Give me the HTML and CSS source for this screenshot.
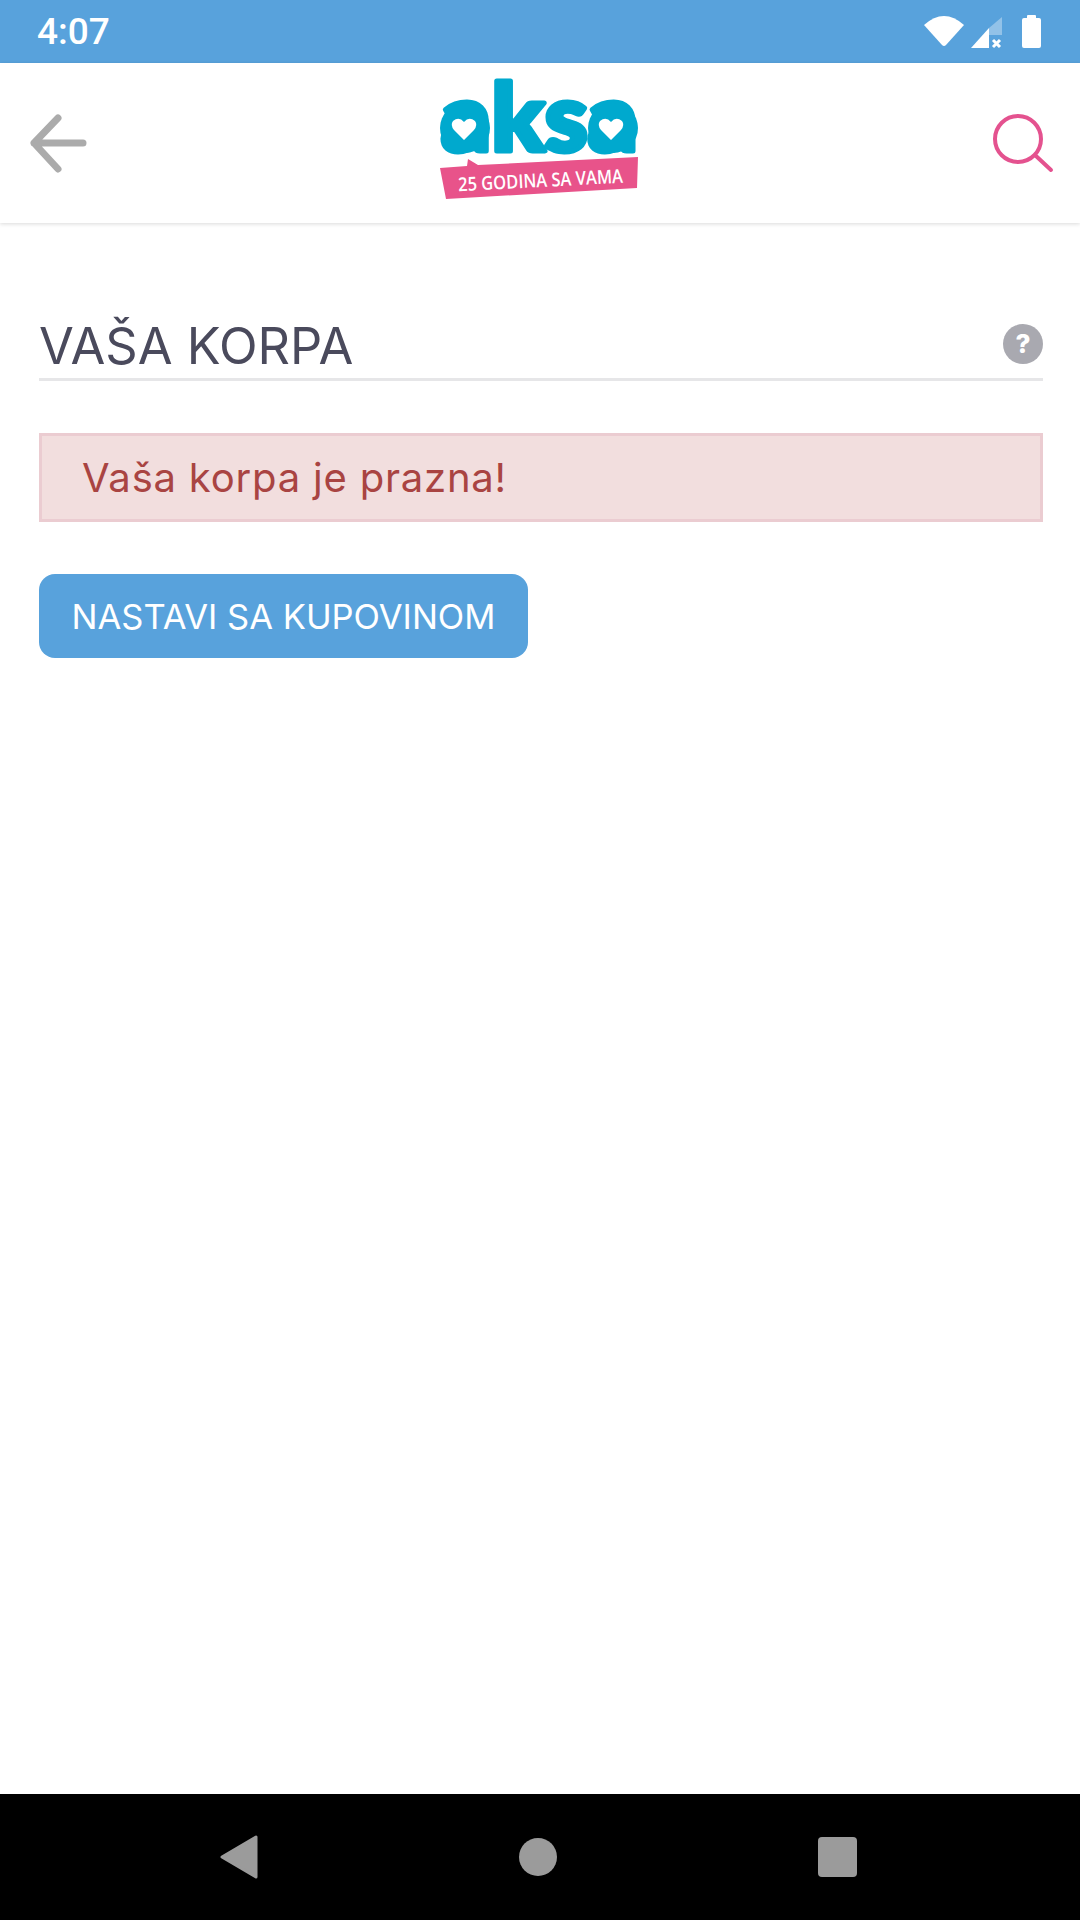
FILE: index.html
```html
<!DOCTYPE html>
<html lang="sr">
<head>
    <meta charset="UTF-8">
    <meta name="viewport" content="width=device-width, initial-scale=1.0">
    <title>Vaša korpa</title>
    <link rel="stylesheet" href="styles.css">
</head>
<body>
    <!-- status bar -->
    <div class="status-bar">
        <span class="status-time">4:07</span>
        <svg class="status-icons" viewBox="920 9 126 44" width="126" height="44">
            <path class="white" d="M924 24 Q944 6 964 24 L946 44 Q944 46 942 44 Z"/>
            <path class="faded" d="M989 27 L1002 16 V34 H989 Z"/>
            <path class="white" d="M971 47 L989 27 V47 Z"/>
            <path class="cross" d="M993 39 L1000 46 M1000 39 L993 46"/>
            <path class="white" d="M1027 17 V15 Q1027 14 1028 14 H1035 Q1036 14 1036 15 V17 H1039 Q1041 17 1041 19 V45 Q1041 47 1039 47 H1024 Q1022 47 1022 45 V19 Q1022 17 1024 17 Z"/>
        </svg>
    </div>

    <!-- top bar -->
    <header class="top-bar">
        <svg class="top-icon" viewBox="24 103 68 80" width="68" height="80">
            <path class="back-arrow" d="M83 143 H34 M58 118 L34 143 L58 169"/>
        </svg>
        <svg class="logo" viewBox="425 63 230 160" width="230" height="160">
            <text class="logo-word" x="441" y="151" textLength="197" lengthAdjust="spacingAndGlyphs">aksa</text>
            <circle class="logo-bowl" cx="465" cy="128" r="25"/>
            <circle class="logo-bowl" cx="613" cy="128" r="25"/>
            <path class="logo-heart" d="M464 140 L454 130 Q450 125 453 121 Q459 116 464 122 Q469 116 475 121 Q478 125 474 130 Z"/>
            <path class="logo-heart" d="M611 140 L601 130 Q597 125 600 121 Q606 116 611 122 Q616 116 622 121 Q625 125 621 130 Z"/>
            <path class="logo-banner" d="M440 168 L467 166 L468 159 L478 165 L638 157 L637 188 L446 199 Z"/>
            <text class="logo-tag" x="458" y="187" textLength="165" lengthAdjust="spacingAndGlyphs" transform="rotate(-3 540 180)">25 GODINA SA VAMA</text>
        </svg>
        <svg class="top-icon" viewBox="988 103 68 80" width="68" height="80">
            <circle class="search-icon" cx="1018" cy="139" r="23"/>
            <path class="search-icon" d="M1036 156 L1051 170"/>
        </svg>
    </header>

    <!-- cart -->
    <main class="content">
        <div class="title-row">
            <h1>VAŠA KORPA</h1>
            <span class="help">?</span>
        </div>
        <div class="alert">Vaša korpa je prazna!</div>
        <button class="continue" type="button">NASTAVI SA KUPOVINOM</button>
    </main>

    <!-- android nav -->
    <div class="nav-bar">
        <svg viewBox="0 0 38 44" width="38" height="44"><path class="nav-shape" d="M36 2 V42 L2 22 Z"/></svg>
        <span class="nav-circle"></span>
        <span class="nav-square"></span>
    </div>
</body>
</html>
```

FILE: styles.css
```css
* {
    box-sizing: border-box;
}

body {
    margin: 0;
    width: 1080px;
    height: 1920px;
    display: flex;
    flex-direction: column;
    background: #fff;
    font-family: Inter, "Open Sans", sans-serif;
}

/* status bar */
.status-bar {
    height: 63px;
    background: #58a2dc;
    display: flex;
    justify-content: space-between;
    align-items: center;
    padding: 0 34px 0 37px;
}

.status-time {
    font-family: Roboto, sans-serif;
    font-weight: 500;
    font-size: 37px;
    color: #fff;
}

.white {
    fill: #fff;
}

.faded {
    fill: #fff;
    opacity: 0.35;
}

.cross {
    fill: none;
    stroke: #fff;
    stroke-width: 3;
}

/* top bar */
.top-bar {
    height: 160px;
    background: #fff;
    display: flex;
    justify-content: space-between;
    align-items: center;
    padding: 0 24px;
    box-shadow: 0 1px 4px rgba(0, 0, 0, 0.15);
}

.back-arrow {
    fill: none;
    stroke: #ababab;
    stroke-width: 7;
    stroke-linecap: round;
    stroke-linejoin: round;
}

.search-icon {
    fill: none;
    stroke: #e4528f;
    stroke-width: 4;
    stroke-linecap: round;
}

.logo {
    overflow: visible;
}

.logo-word {
    font-family: Lato, sans-serif;
    font-weight: 900;
    font-size: 94px;
    fill: #00a9ce;
    stroke: #00a9ce;
    stroke-width: 5;
    stroke-linejoin: round;
}

.logo-bowl {
    fill: #00a9ce;
}

.logo-heart {
    fill: #fff;
}

.logo-banner {
    fill: #e8538a;
}

.logo-tag {
    font-family: "Open Sans", sans-serif;
    font-weight: 600;
    font-size: 19px;
    fill: #fff;
}

/* content */
.content {
    flex: 1;
    padding: 0 37px 0 39px;
}

.title-row {
    margin-top: 88px;
    height: 70px;
    display: flex;
    justify-content: space-between;
    align-items: center;
    border-bottom: 3px solid #e6e6e8;
}

h1 {
    margin: 0;
    padding-top: 2px;
    font-weight: 400;
    font-size: 50.5px;
    line-height: 68px;
    color: #4a4a5c;
}

.help {
    width: 40px;
    height: 40px;
    margin-bottom: 2px;
    border-radius: 50%;
    background: #a9a9b0;
    color: #fff;
    font-weight: 800;
    font-size: 26px;
    line-height: 40px;
    text-align: center;
}

.alert {
    margin-top: 52px;
    height: 89px;
    padding-left: 40px;
    display: flex;
    align-items: center;
    background: #f2dede;
    border: 3px solid #ebccd1;
    color: #a94442;
    font-size: 40px;
    letter-spacing: 0.8px;
}

.continue {
    display: block;
    margin-top: 52px;
    width: 489px;
    height: 84px;
    padding: 0;
    border: none;
    border-radius: 16px;
    background: #58a2dc;
    color: #fff;
    font-family: inherit;
    font-size: 34.5px;
}

/* android nav */
.nav-bar {
    height: 126px;
    background: #000;
    display: flex;
    align-items: center;
    justify-content: space-between;
    padding: 0 223px 0 220px;
}

.nav-shape {
    fill: #9b9b9b;
    stroke: #9b9b9b;
    stroke-width: 3;
    stroke-linejoin: round;
}

.nav-circle {
    width: 38px;
    height: 38px;
    border-radius: 50%;
    background: #9b9b9b;
}

.nav-square {
    width: 39px;
    height: 40px;
    border-radius: 4px;
    background: #9b9b9b;
}
```
